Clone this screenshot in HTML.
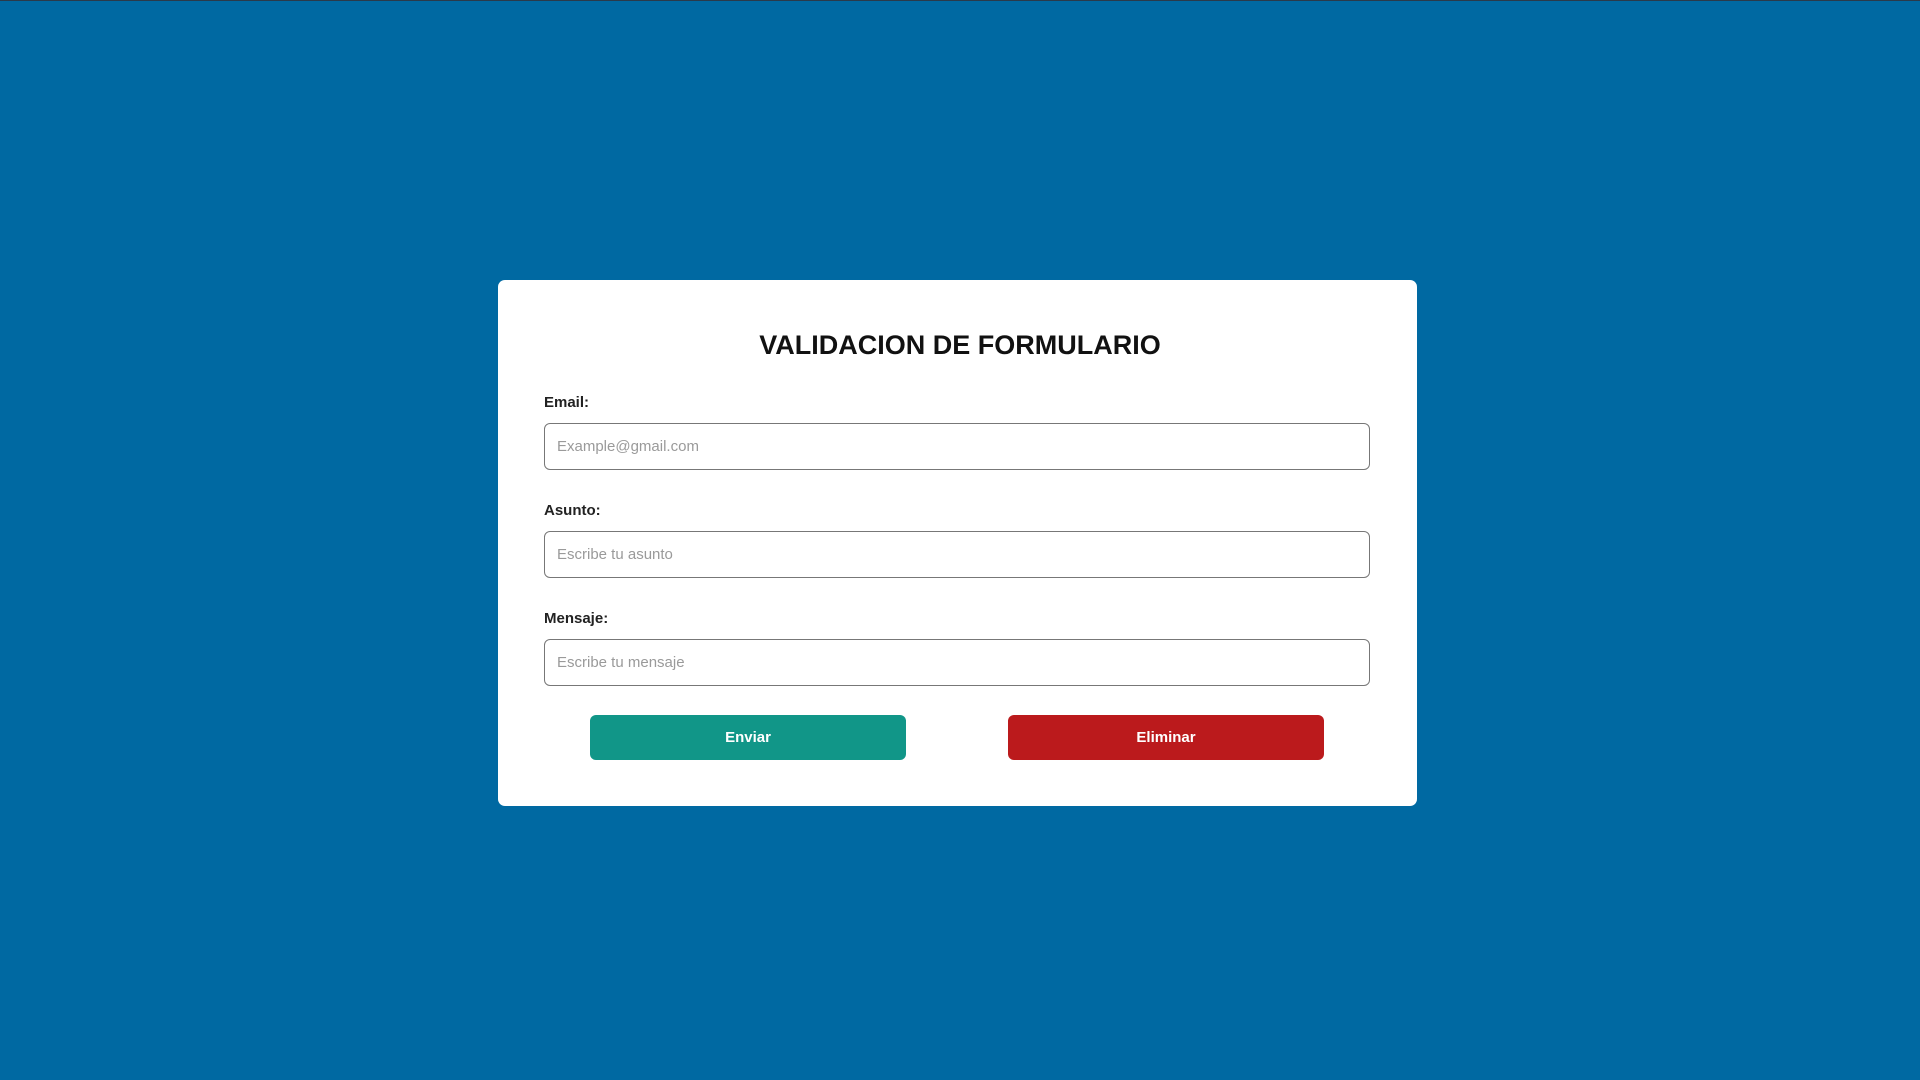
<!DOCTYPE html>
<html><head><meta charset="utf-8"><style>
html,body{margin:0;padding:0;}
body{width:1920px;height:1080px;background:#0069a2;border-top:1px solid #2a3a4a;box-sizing:border-box;position:relative;font-family:"Liberation Sans",sans-serif;overflow:hidden;}
.card{position:absolute;left:498px;top:279px;width:919px;height:526px;background:#fff;border-radius:7px;}
h1{position:absolute;left:0;right:0;top:329px;margin:0;text-align:center;font-size:27px;font-weight:bold;color:#111;}
.lbl{position:absolute;left:544px;font-size:15px;font-weight:bold;color:#222;}
.inp{position:absolute;left:544px;width:826px;height:47px;box-sizing:border-box;border:1px solid #777;border-radius:6px;padding-left:12px;line-height:45px;font-size:15px;color:#9a9a9a;}
.btn{position:absolute;top:714px;width:316px;height:45px;border-radius:6px;color:#fff;font-weight:bold;font-size:15px;text-align:center;line-height:45px;}
</style></head><body>
<div class="card"></div>
<h1>VALIDACION DE FORMULARIO</h1>
<div class="lbl" style="top:393px">Email:</div>
<div class="inp" style="top:422px">Example@gmail.com</div>
<div class="lbl" style="top:501px">Asunto:</div>
<div class="inp" style="top:530px">Escribe tu asunto</div>
<div class="lbl" style="top:609px">Mensaje:</div>
<div class="inp" style="top:638px">Escribe tu mensaje</div>
<div class="btn" style="left:590px;background:#119688">Enviar</div>
<div class="btn" style="left:1008px;background:#bb1a1c">Eliminar</div>
</body></html>
